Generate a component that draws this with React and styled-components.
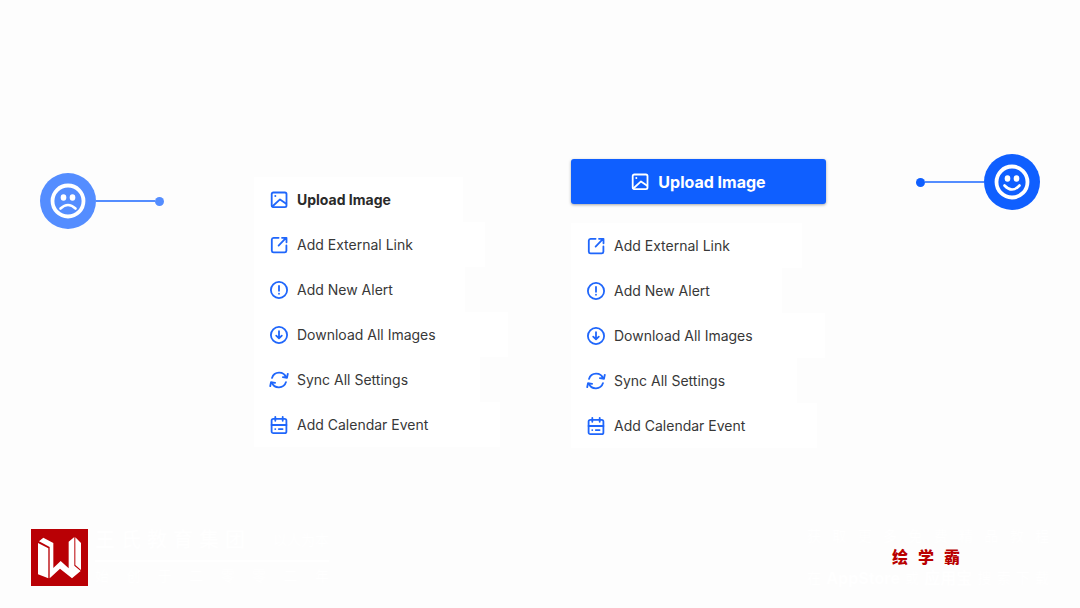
import React from "react";
import styled, { createGlobalStyle } from "styled-components";

const GlobalStyle = createGlobalStyle`
  * { box-sizing: border-box; }
  body {
    margin: 0;
    background: #fdfdfd;
    color: #333;
    font-family: Inter, "Noto Sans CJK SC", sans-serif;
  }
`;

const Page = styled.div`
  min-height: 100vh;
  display: flex;
  flex-direction: column;
  justify-content: space-between;
`;

const Comparison = styled.main`
  display: grid;
  grid-template-columns: 1fr auto 1fr;
  align-items: start;
  padding: 154px 40px 32px;
`;

const Menus = styled.div`
  display: flex;
  align-items: flex-start;
  gap: 62px;
`;

const Menu = styled.section`
  width: 255px;
  padding-top: ${(p) => (p.$raised ? 5 : 23)}px;
`;

const List = styled.ul`
  list-style: none;
  margin: 0;
  padding: 0;
`;

const Item = styled.li`
  display: flex;
`;

const MenuButton = styled.button`
  display: flex;
  align-items: center;
  gap: 9px;
  height: 45px;
  padding: 0 72px 0 16px;
  border: 0;
  background: #fff;
  color: ${(p) => (p.$strong ? "#2a2a2a" : "#383838")};
  font: ${(p) => (p.$strong ? 700 : 400)} 14px/20px Inter, sans-serif;
  white-space: nowrap;
  cursor: pointer;

  svg { color: #1f66fb; }
`;

const PrimaryButton = styled.button`
  display: flex;
  align-items: center;
  justify-content: center;
  gap: 9px;
  width: 100%;
  height: 45px;
  margin-bottom: 19px;
  border: 0;
  border-radius: 3px;
  background: #0f5fff;
  box-shadow: 0 1px 3px rgba(0, 0, 0, 0.35);
  color: #fff;
  font: 700 16px/20px Inter, sans-serif;
  cursor: pointer;
`;

const IconSvg = styled.svg`
  flex: none;
  width: 18px;
  height: 18px;
  overflow: visible;
  fill: none;
  stroke: currentColor;
  stroke-width: 1.8;
  stroke-linecap: round;
  stroke-linejoin: round;
`;

const Marker = styled.div`
  display: flex;
  align-items: center;
  flex-direction: ${(p) => (p.$reverse ? "row-reverse" : "row")};
  margin-top: ${(p) => (p.$reverse ? 0 : 19)}px;
  color: ${(p) => (p.$reverse ? "#0f5fff" : "#548dff")};
`;

const Face = styled.svg`
  flex: none;
  width: 56px;
  height: 56px;
`;

const Stem = styled.span`
  width: 59px;
  height: 2px;
  background: #548dff;
`;

const Dot = styled.span`
  width: 9px;
  height: 9px;
  border-radius: 50%;
  background: currentColor;
`;

const Footer = styled.footer`
  display: flex;
  justify-content: space-between;
  align-items: center;
  padding: 0 31px 20px;
  color: #fff;
`;

const Brand = styled.div`
  display: flex;
  align-items: center;
  gap: 7px;
`;

const Logo = styled.svg`
  width: 57px;
  height: 57px;
`;

const BrandText = styled.div`
  width: 234px;
`;

const Spread = styled.div`
  display: flex;
  align-items: center;
  justify-content: space-between;
  font-size: 14px;
  line-height: 20px;
`;

const Heading = styled(Spread)`
  height: 28px;
  padding-bottom: 4px;
`;

const GroupName = styled.span`
  display: flex;
  gap: 6px;
  font-size: 20px;
  line-height: 24px;
  font-weight: 500;
`;

const Rule = styled.hr`
  height: 2px;
  margin: 4px 0;
  border: 0;
  background: #fff;
`;

const Promo = styled.div`
  width: 242px;
`;

const AppName = styled.div`
  display: flex;
  justify-content: center;
  gap: 10px;
  margin: 1px 4px 1px 0;
  color: #b90000;
  font-size: 16px;
  font-weight: 900;
  line-height: 20px;
`;

const StoreName = styled.strong`
  font-size: 16px;
`;

function Chars({ text }) {
  return Array.from(text).map((c, i) => <span key={i}>{c}</span>);
}

const shapes = {
  image: (
    <>
      <rect x="1.7" y="1.5" width="14.8" height="14.6" rx="1.6" />
      <path d="M2.3 15.5 10 8.4l6.2 4.4" />
      <circle cx="5.3" cy="5.1" r="1" fill="currentColor" stroke="none" />
    </>
  ),
  link: (
    <>
      <path d="M8.6 1.8H3.6A1.9 1.9 0 0 0 1.8 3.6v11a1.9 1.9 0 0 0 1.8 1.8h11a1.9 1.9 0 0 0 1.8-1.8V9.4" />
      <path d="M8.6 9.6 15.8 2.2M12 1.8h4.5v4.5" />
    </>
  ),
  alert: (
    <>
      <circle cx="9" cy="9" r="8.1" />
      <path d="M9 5v4.8M9 12.7v.1" />
    </>
  ),
  download: (
    <>
      <circle cx="9" cy="9" r="8.1" />
      <path d="M9 5.2v7M6.2 9.6 9 12.4l2.8-2.8" />
    </>
  ),
  sync: (
    <>
      <path d="M2 6.9A7.5 7.5 0 0 1 16.2 6.6M17.8 2.8l-.8 4-4.1-.7" />
      <path d="M16 11.1A7.5 7.5 0 0 1 1.8 11.4M.2 15.2l.8-4 4.1.7" />
    </>
  ),
  calendar: (
    <>
      <rect x="1.6" y="2.8" width="14.8" height="14.4" rx="1.8" />
      <path d="M5.3.8v4M12.7.8v4M1.6 9h14.8M5.2 13.1h.1M8.8 13.1h3.8" />
    </>
  ),
};

function Icon({ name }) {
  return (
    <IconSvg viewBox="0 0 18 18" aria-hidden="true">
      {shapes[name]}
    </IconSvg>
  );
}

function MoodMarker({ happy }) {
  return (
    <Marker $reverse={happy}>
      <Face viewBox="0 0 56 56" role="img" aria-label={happy ? "Good" : "Bad"}>
        <circle cx="28" cy="28" r="28" fill="currentColor" />
        <circle cx="28" cy="28" r="15.5" fill="none" stroke="#fff" strokeWidth="3.8" />
        <ellipse cx="23.5" cy="24.5" rx="2.8" ry="3.3" fill="#fff" />
        <ellipse cx="32.5" cy="24.5" rx="2.8" ry="3.3" fill="#fff" />
        <path
          d={happy ? "M20.5 31.5Q28 39.5 35.5 31.5" : "M20.5 35.5Q28 28.5 35.5 35.5"}
          fill="none"
          stroke="#fff"
          strokeWidth="2.6"
          strokeLinecap="round"
        />
      </Face>
      <Stem />
      <Dot />
    </Marker>
  );
}

const actions = [
  ["link", "Add External Link"],
  ["alert", "Add New Alert"],
  ["download", "Download All Images"],
  ["sync", "Sync All Settings"],
  ["calendar", "Add Calendar Event"],
];

function ActionItem({ icon, label, strong }) {
  return (
    <Item>
      <MenuButton type="button" $strong={strong}>
        <Icon name={icon} />
        {label}
      </MenuButton>
    </Item>
  );
}

export default function App() {
  return (
    <Page>
      <GlobalStyle />
      <Comparison>
        <MoodMarker happy={false} />
        <Menus>
          <Menu>
            <List>
              <ActionItem icon="image" label="Upload Image" strong />
              {actions.map(([icon, label]) => (
                <ActionItem key={label} icon={icon} label={label} />
              ))}
            </List>
          </Menu>
          <Menu $raised>
            <PrimaryButton type="button">
              <Icon name="image" />
              Upload Image
            </PrimaryButton>
            <List>
              {actions.map(([icon, label]) => (
                <ActionItem key={label} icon={icon} label={label} />
              ))}
            </List>
          </Menu>
        </Menus>
        <MoodMarker happy />
      </Comparison>
      <Footer>
        <Brand>
          <Logo viewBox="0 0 171 171" aria-hidden="true">
            <rect width="171" height="171" fill="#b90005" />
            <g fill="#fff">
              <path d="M21 42 52 58V148L21 136Z" />
              <path d="M24 37 37 26 67 42V117L89 96 113 118V38L130 24V110L149 126 123 148 87 119 56 148V54Z" />
              <path d="M133 25 150 42V123L133 108Z" />
            </g>
          </Logo>
          <BrandText>
            <Heading>
              <GroupName>
                <Chars text="王氏教育集团" />
              </GroupName>
              <span>以人为本</span>
            </Heading>
            <Rule />
            <Spread>
              <Chars text="始创于二零零二年" />
            </Spread>
          </BrandText>
        </Brand>
        <Promo>
          <Spread>
            <Chars text="获取更多免费精品教程" />
          </Spread>
          <AppName>
            <Chars text="绘学霸" />
          </AppName>
          <Spread>
            <span>在</span>
            <StoreName>AppStore</StoreName>
            <span>或</span>
            <StoreName>应用宝</StoreName>
            <Chars text="搜索下载" />
          </Spread>
        </Promo>
      </Footer>
    </Page>
  );
}
